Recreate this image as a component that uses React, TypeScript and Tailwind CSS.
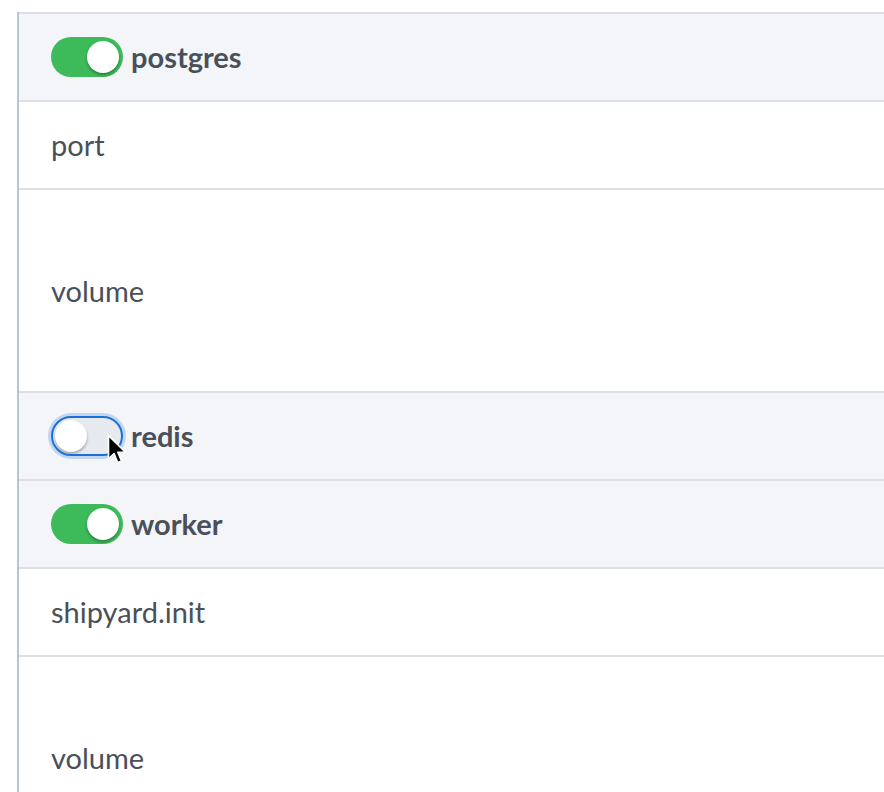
import { useState } from "react";

type Row =
  | { kind: "service"; name: string; enabled: boolean; focused?: boolean }
  | { kind: "field"; label: string; tall?: boolean };

const rows: Row[] = [
  { kind: "service", name: "postgres", enabled: true },
  { kind: "field", label: "port" },
  { kind: "field", label: "volume", tall: true },
  { kind: "service", name: "redis", enabled: false, focused: true },
  { kind: "service", name: "worker", enabled: true },
  { kind: "field", label: "shipyard.init" },
  { kind: "field", label: "volume", tall: true },
];

function Toggle({ on, focused, onClick }: { on: boolean; focused?: boolean; onClick: () => void }) {
  return (
    <button
      onClick={onClick}
      className={`relative flex h-[40px] w-[72px] shrink-0 items-center rounded-full p-[4px] ${
        on ? "bg-[#3dba5a] justify-end" : "bg-[#e6e9ee] justify-start"
      } ${focused ? "ring-[3px] ring-[#c3d6f1] outline-2 outline-[#1a6fdb] -outline-offset-2" : ""}`}
    >
      <span className="h-[32px] w-[32px] rounded-full bg-white shadow-[0_2px_3px_rgba(0,0,0,0.3)]" />
    </button>
  );
}

// mouse pointer hovering the focused switch
function Cursor() {
  return (
    <svg
      className="pointer-events-none absolute left-[88px] top-[41px]"
      width="20"
      height="31"
      viewBox="0 0 13 20"
    >
      <path
        d="M1 1 L1 16 L4.6 12.6 L7 18.4 L9.4 17.4 L7 11.8 L12 11.8 Z"
        fill="#000"
        stroke="#fff"
        strokeWidth="1"
        strokeLinejoin="round"
      />
    </svg>
  );
}

export default function App() {
  const [state, setState] = useState(rows);

  return (
    <div className="h-[792px] overflow-hidden bg-white pl-[17px] pt-[12px] font-['Lato',sans-serif] text-[#4a5059]">
      <div className="border-l-2 border-[#b6c3d8]">
        {state.map((row, idx) =>
          row.kind === "service" ? (
            <div
              key={idx}
              className="relative flex h-[88px] items-center gap-[8px] border-t-2 border-[#dcdfe4] bg-[#f3f5f9] pl-[32px]"
            >
              <Toggle
                on={row.enabled}
                focused={row.focused}
                onClick={() =>
                  setState(prev =>
                    prev.map((r, i) => (i === idx && r.kind === "service" ? { ...r, enabled: !r.enabled } : r))
                  )
                }
              />
              <span className="text-[29px] font-bold">{row.name}</span>
              {row.focused && <Cursor />}
            </div>
          ) : (
            <div
              key={idx}
              className={`flex items-center border-t-2 border-[#dcdfe4] pl-[32px] text-[29px] ${
                row.tall ? "h-[203px]" : "h-[88px]"
              }`}
            >
              {row.label}
            </div>
          )
        )}
      </div>
    </div>
  );
}
